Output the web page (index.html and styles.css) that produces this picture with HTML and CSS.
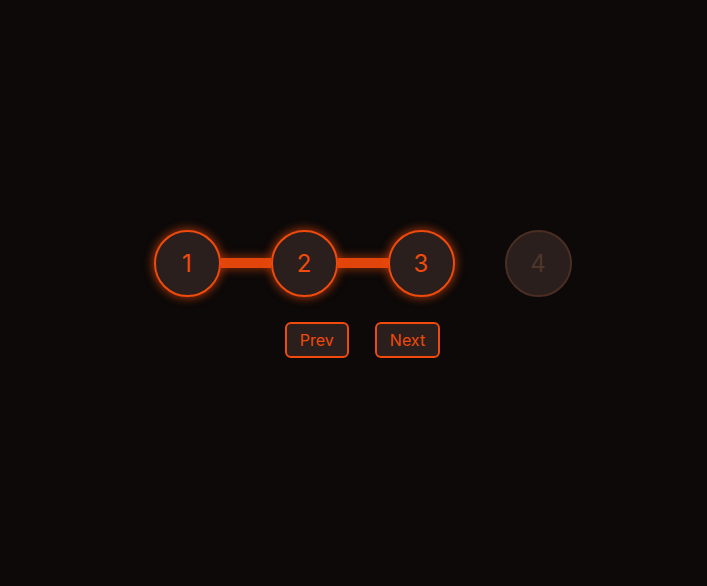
FILE: index.html
```html
<!DOCTYPE html>
<html>
<head>
<meta charset="utf-8">
<link rel="stylesheet" href="styles.css">
</head>
<body>
<main class="stage">
  <div class="stepper">
    <div class="steps">
      <div class="step active">1</div>
      <div class="bar active"></div>
      <div class="step active">2</div>
      <div class="bar active"></div>
      <div class="step active">3</div>
      <div class="bar"></div>
      <div class="step">4</div>
    </div>
    <div class="controls">
      <button class="btn">Prev</button>
      <button class="btn">Next</button>
    </div>
  </div>
</main>
</body>
</html>
```

FILE: styles.css
```css
html, body {
  margin: 0;
  height: 100%;
  background: #0c0908;
}
.stage {
  height: 100%;
  display: flex;
  align-items: center;
  justify-content: center;
  padding-left: 18px;
  box-sizing: border-box;
  font-family: "Inter", "Noto Sans", sans-serif;
}
.stepper {
  display: flex;
  flex-direction: column;
  align-items: center;
  gap: 25px;
  margin-top: 1px;
}
.steps {
  display: flex;
  align-items: center;
}
.step {
  width: 63px;
  height: 63px;
  border-radius: 50%;
  border: 2px solid #4a2e24;
  background: #2a1f1c;
  color: #4e362d;
  display: flex;
  align-items: center;
  justify-content: center;
  font-size: 24px;
  position: relative;
  z-index: 1;
}
.step.active {
  border-color: #f04a0c;
  color: #f04a0c;
  box-shadow: 0 0 8px 2px rgba(240, 74, 12, 0.55);
}
.bar {
  width: 50px;
  height: 10px;
  background: transparent;
}
.bar.active {
  background: #e2450b;
  box-shadow: 0 0 8px 2px rgba(240, 74, 12, 0.45);
}
.controls {
  display: flex;
  gap: 26px;
}
.btn {
  font-family: "Inter", "Noto Sans", sans-serif;
  font-size: 16px;
  color: #f04a0c;
  background: #2a1f1c;
  border: 2px solid #f04a0c;
  border-radius: 6px;
  height: 36px;
  padding: 0 13px;
  cursor: pointer;
}
```
